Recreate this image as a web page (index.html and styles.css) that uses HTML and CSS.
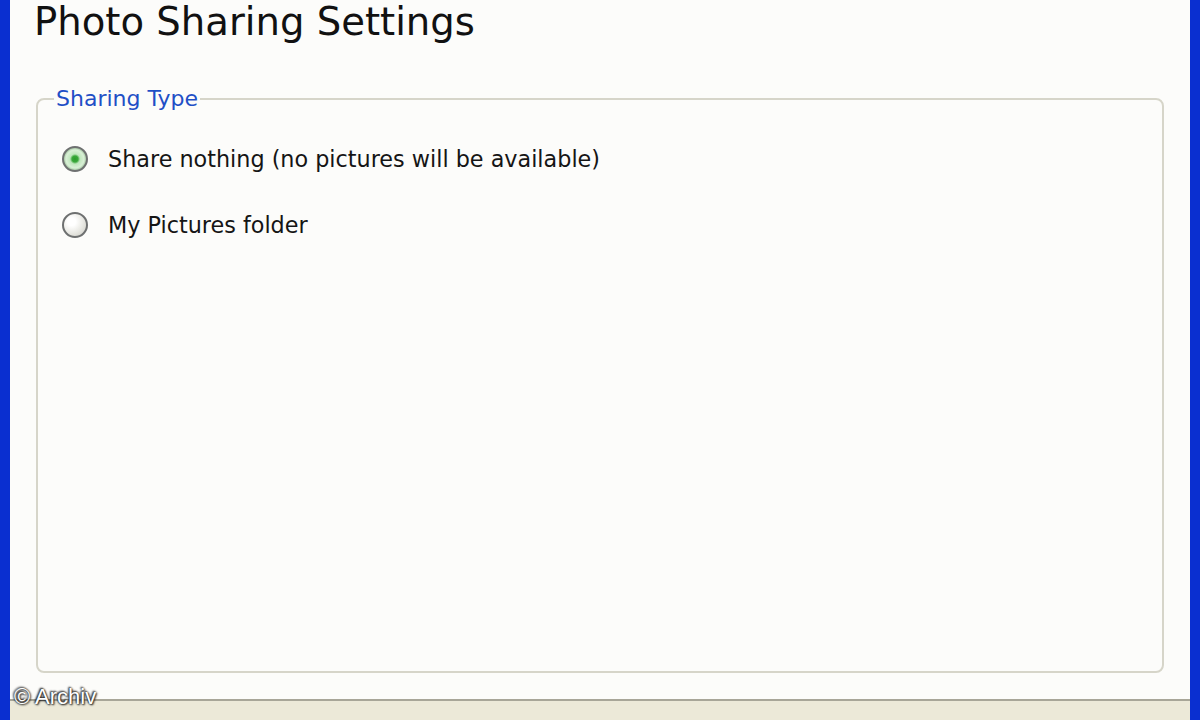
FILE: index.html
```html
<!DOCTYPE html>
<html lang="en">

<head>
    <meta charset="UTF-8">
    <meta name="viewport" content="width=device-width, initial-scale=1.0">
    <title>Photo Sharing Settings</title>
    <link rel="stylesheet" href="styles.css">
</head>

<body>
    <div class="frame">
        <div class="page">
            <h1 class="title">Photo Sharing Settings</h1>
            <fieldset class="group">
                <legend>Sharing Type</legend>
                <label class="option">
                    <span class="radio checked"></span>
                    Share nothing (no pictures will be available)
                </label>
                <label class="option">
                    <span class="radio"></span>
                    My Pictures folder
                </label>
            </fieldset>
        </div>
        <div class="footer"></div>
        <span class="credit">© Archiv</span>
    </div>
</body>

</html>
```

FILE: styles.css
```css
body {
    margin: 0;
    width: 1200px;
    height: 720px;
    overflow: hidden;
    font-family: "DejaVu Sans", Verdana, sans-serif;
}

.frame {
    position: relative;
    height: 720px;
    display: flex;
    flex-direction: column;
    border-left: 10px solid #0a2fd0;
    border-right: 10px solid #0a2fd0;
    box-shadow: inset 2px 0 0 #5a7ef0, inset -2px 0 0 #2a50e0;
}

.page {
    height: 699px;
    background: #fcfcfa;
    padding: 0 26px 0 26px;
    box-sizing: border-box;
}

.title {
    margin: 0 0 0 -2px;
    padding: 3px 0 0 0;
    font-size: 38.6px;
    font-weight: normal;
    line-height: 38px;
    color: #111;
}

.group {
    margin: 45px 0 0 0;
    padding: 30px 0 0 24px;
    height: 587px;
    box-sizing: border-box;
    border: 2px solid #d6d5c9;
    border-radius: 8px;
}

legend {
    margin-left: -8px;
    padding: 0 2px;
    font-size: 22px;
    line-height: 26px;
    color: #1f4fc6;
}

.option {
    display: flex;
    align-items: center;
    gap: 20px;
    height: 34px;
    margin-bottom: 32px;
    font-size: 22.3px;
    color: #151515;
}

.radio {
    width: 22px;
    height: 22px;
    border: 2px solid #6e7070;
    border-radius: 50%;
    background: radial-gradient(circle at 35% 35%, #ffffff 20%, #e6e6e0 60%, #c9c9c2);
}

.radio.checked {
    background: radial-gradient(circle, #2b9c2b 0, #3aa83a 3px, #bfe6bc 5px, #d9f0d6 9px, #a9c9a6 11px);
}

.footer {
    flex: 1;
    background: #ece9d8;
    border-top: 2px solid #a8a698;
}

.credit {
    position: absolute;
    left: 4px;
    bottom: 10px;
    font-family: "Liberation Sans", Arial, sans-serif;
    font-size: 22px;
    color: #fff;
    text-shadow: 0 0 2px #222, 1px 1px 2px #222, -1px -1px 2px #222;
}
```
